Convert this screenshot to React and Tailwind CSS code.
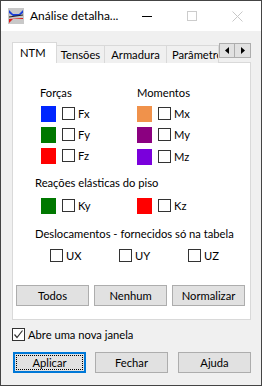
import React from "react";

const font = { fontFamily: 'Lato, "Noto Sans", sans-serif' };

function Box({ checked }) {
  return (
    <div className="w-[13px] h-[13px] border border-[#333333] bg-white shrink-0 flex items-center justify-center">
      {checked && (
        <svg width="11" height="11" viewBox="0 0 11 11">
          <path d="M1.5 5.5 L4 8.5 L9.5 1.5" fill="none" stroke="#333" strokeWidth="1.2" />
        </svg>
      )}
    </div>
  );
}

function ColorRow({ color, label }) {
  return (
    <div className="flex items-center h-[21px]">
      <div className={`w-[15px] h-[16px] ${color}`} />
      <div className="ml-[6px]"><Box /></div>
      <span className="ml-[3px] leading-none text-[#000] whitespace-nowrap">{label}</span>
    </div>
  );
}

function Btn({ children, focus }) {
  if (focus) {
    return (
      <div className="w-[73px] h-[21px] border-2 border-[#0078d7] bg-[#e1e1e1] flex items-center justify-center">
        <div className="w-[67px] h-[15px] border border-dotted border-black flex items-center justify-center leading-none">
          {children}
        </div>
      </div>
    );
  }
  return (
    <div className="w-[73px] h-[21px] border border-[#adadad] bg-[#e1e1e1] flex items-center justify-center leading-none">
      {children}
    </div>
  );
}

export default function App() {
  return (
    <div className="w-[262px] h-[386px] border border-[#444444] bg-[#f0f0f0] text-[11.2px] text-black flex flex-col overflow-hidden whitespace-nowrap" style={font}>
      {/* title bar */}
      <div className="h-[30px] bg-white flex items-center shrink-0">
        <div className="ml-[7px] w-[16px] h-[16px]">
          <svg width="16" height="16" viewBox="0 0 16 16">
            <rect x="0" y="0" width="16" height="16" fill="#c8c8c8" />
            <path d="M1 2 L5 6 L11 6 L15 2 L15 5 L11 8 L5 8 L1 5 Z" fill="#1a3fd9" />
            <path d="M1 9 L15 7" stroke="#222" strokeWidth="1" />
            <path d="M1 11 L15 10 L15 11 L5 11 L1 15 Z" fill="#e01818" />
          </svg>
        </div>
        <span className="ml-[6px] text-[12px] leading-none">Análise detalha...</span>
        <div className="ml-auto flex items-center">
          <div className="w-[10px] h-px bg-black mr-[35px]" />
          <div className="w-[10px] h-[10px] border border-[#cccccc] mr-[35px]" />
          <svg width="11" height="11" viewBox="0 0 11 11" className="mr-[18px]">
            <path d="M0.5 0.5 L10.5 10.5 M10.5 0.5 L0.5 10.5" stroke="#c8c8c8" strokeWidth="1" />
          </svg>
        </div>
      </div>

      {/* tabs */}
      <div className="ml-[11px] mt-[11px] w-[239px] relative">
        <div className="flex items-end h-[21px] relative z-10">
          <div className="w-[45px] h-[21px] bg-white border border-b-0 border-[#d9d9d9] flex items-center pl-[7px] leading-none">NTM</div>
          <div className="h-[18px] w-[48px] border border-l-0 border-b-0 border-[#d9d9d9] bg-[#f0f0f0] flex items-center justify-center leading-none">Tensões</div>
          <div className="h-[18px] w-[62px] border border-l-0 border-b-0 border-[#d9d9d9] bg-[#f0f0f0] flex items-center justify-center leading-none">Armadura</div>
          <div className="h-[18px] w-[52px] border border-l-0 border-b-0 border-[#d9d9d9] bg-[#f0f0f0] flex items-center pl-[5px] leading-none overflow-hidden">Parâmetros</div>
          <div className="absolute left-[207px] top-[1px] flex">
            <div className="w-[16px] h-[15px] bg-[#e1e1e1] border border-[#adadad] flex items-center justify-center">
              <svg width="4" height="7" viewBox="0 0 4 7"><path d="M4 0 L0 3.5 L4 7 Z" fill="#000" /></svg>
            </div>
            <div className="w-[16px] h-[15px] bg-[#e1e1e1] border border-l-0 border-[#adadad] flex items-center justify-center">
              <svg width="4" height="7" viewBox="0 0 4 7"><path d="M0 0 L4 3.5 L0 7 Z" fill="#000" /></svg>
            </div>
          </div>
        </div>
        {/* panel */}
        <div className="-mt-px h-[258px] bg-white border border-[#d9d9d9] flex flex-col">
          <div className="mt-[22px] ml-[28px] grid grid-cols-[96px_100px]">
            <div className="flex flex-col">
              <div className="h-[16px] leading-[16px] -ml-px">Forças</div>
              <div className="mt-[2px]">
                <ColorRow color="bg-[#0026ff]" label="Fx" />
                <ColorRow color="bg-[#007800]" label="Fy" />
                <ColorRow color="bg-[#ff0000]" label="Fz" />
              </div>
            </div>
            <div className="flex flex-col">
              <div className="h-[16px] leading-[16px]">Momentos</div>
              <div className="mt-[2px]">
                <ColorRow color="bg-[#f0924b]" label="Mx" />
                <ColorRow color="bg-[#8b0080]" label="My" />
                <div className="mt-[1px]"><ColorRow color="bg-[#7a00dc]" label="Mz" /></div>
              </div>
            </div>
          </div>
          <div className="mt-[8px] ml-[22px] h-[16px] leading-[16px]">Reações elásticas do piso</div>
          <div className="mt-[4px] ml-[28px] grid grid-cols-[96px_100px]">
            <ColorRow color="bg-[#007800]" label="Ky" />
            <ColorRow color="bg-[#ff0000]" label="Kz" />
          </div>
          <div className="mt-[10px] ml-[22px] h-[16px] leading-[16px]">Deslocamentos - fornecidos só na tabela</div>
          <div className="mt-[7px] ml-[37px] flex items-center">
            <div className="w-[69px] flex items-center"><Box /><span className="ml-[3px] leading-none">UX</span></div>
            <div className="w-[69px] flex items-center"><Box /><span className="ml-[3px] leading-none">UY</span></div>
            <div className="flex items-center"><Box /><span className="ml-[3px] leading-none">UZ</span></div>
          </div>
          <div className="mt-[23px] ml-[3px] flex gap-[5px]">
            <Btn>Todos</Btn>
            <Btn>Nenhum</Btn>
            <Btn>Normalizar</Btn>
          </div>
        </div>
      </div>

      {/* open new window */}
      <div className="ml-[11px] mt-[8px] flex items-center">
        <Box checked />
        <span className="ml-[3px] leading-none">Abre uma nova janela</span>
      </div>

      <div className="ml-[12px] mt-[11px] flex">
        <Btn focus>Aplicar</Btn>
        <div className="ml-[9px]"><Btn>Fechar</Btn></div>
        <div className="ml-[10px]"><Btn>Ajuda</Btn></div>
      </div>
    </div>
  );
}
